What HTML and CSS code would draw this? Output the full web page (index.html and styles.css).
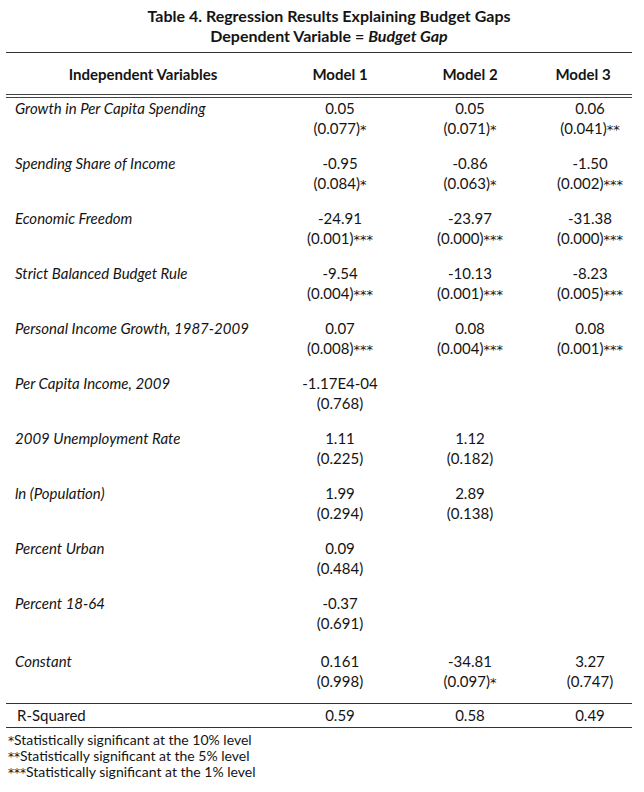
FILE: index.html
```html
<!DOCTYPE html>
<html>
<head>
<meta charset="utf-8">
<link rel="stylesheet" href="styles.css">
</head>
<body>
<div class="page">
  <div class="title">
    <div>Table 4. Regression Results Explaining Budget Gaps</div>
    <div>Dependent Variable = <em>Budget Gap</em></div>
  </div>
  <table class="reg">
    <colgroup>
      <col class="c0"><col class="c1"><col class="c2"><col class="c3">
    </colgroup>
    <thead>
      <tr>
        <th class="hvar">Independent Variables</th>
        <th>Model 1</th>
        <th>Model 2</th>
        <th class="h3">Model 3</th>
      </tr>
    </thead>
    <tbody>
      <tr><td class="var">Growth in Per Capita Spending</td><td><div>0.05</div><div>(0.077)<span class="sig">*</span></div></td><td><div>0.05</div><div>(0.071)<span class="sig">*</span></div></td><td class="m3"><div>0.06</div><div>(0.041)<span class="sig">**</span></div></td></tr>
      <tr><td class="var">Spending Share of Income</td><td><div>-0.95</div><div>(0.084)<span class="sig">*</span></div></td><td><div>-0.86</div><div>(0.063)<span class="sig">*</span></div></td><td class="m3"><div>-1.50</div><div>(0.002)<span class="sig">***</span></div></td></tr>
      <tr><td class="var">Economic Freedom</td><td><div>-24.91</div><div>(0.001)<span class="sig">***</span></div></td><td><div>-23.97</div><div>(0.000)<span class="sig">***</span></div></td><td class="m3"><div>-31.38</div><div>(0.000)<span class="sig">***</span></div></td></tr>
      <tr><td class="var">Strict Balanced Budget Rule</td><td><div>-9.54</div><div>(0.004)<span class="sig">***</span></div></td><td><div>-10.13</div><div>(0.001)<span class="sig">***</span></div></td><td class="m3"><div>-8.23</div><div>(0.005)<span class="sig">***</span></div></td></tr>
      <tr><td class="var">Personal Income Growth, 1987-2009</td><td><div>0.07</div><div>(0.008)<span class="sig">***</span></div></td><td><div>0.08</div><div>(0.004)<span class="sig">***</span></div></td><td class="m3"><div>0.08</div><div>(0.001)<span class="sig">***</span></div></td></tr>
      <tr><td class="var">Per Capita Income, 2009</td><td><div>-1.17E4-04</div><div>(0.768)</div></td><td></td><td class="m3"></td></tr>
      <tr><td class="var">2009 Unemployment Rate</td><td><div>1.11</div><div>(0.225)</div></td><td><div>1.12</div><div>(0.182)</div></td><td class="m3"></td></tr>
      <tr><td class="var">ln (Population)</td><td><div>1.99</div><div>(0.294)</div></td><td><div>2.89</div><div>(0.138)</div></td><td class="m3"></td></tr>
      <tr><td class="var">Percent Urban</td><td><div>0.09</div><div>(0.484)</div></td><td></td><td class="m3"></td></tr>
      <tr><td class="var">Percent 18-64</td><td><div>-0.37</div><div>(0.691)</div></td><td></td><td class="m3"></td></tr>
      <tr class="const"><td class="var">Constant</td><td><div>0.161</div><div>(0.998)</div></td><td><div>-34.81</div><div>(0.097)<span class="sig">*</span></div></td><td class="m3"><div>3.27</div><div>(0.747)</div></td></tr>
      <tr class="rsq"><td class="plain">R-Squared</td><td>0.59</td><td>0.58</td><td class="m3">0.49</td></tr>
    </tbody>
  </table>
  <div class="notes">
    <div><span class="sig">*</span>Statistically significant at the 10% level</div>
    <div><span class="sig">**</span>Statistically significant at the 5% level</div>
    <div><span class="sig">***</span>Statistically significant at the 1% level</div>
  </div>
</div>
</body>
</html>
```
FILE: styles.css
```css
html, body {
  margin: 0;
  padding: 0;
  background: #ffffff;
}
body {
  font-family: "Lato", "Open Sans", sans-serif;
  font-size: 15px;
  color: #141414;
}
.page {
  width: 644px;
  padding-top: 6px;
}
.title {
  text-align: center;
  font-weight: bold;
  font-size: 16px;
  line-height: 20px;
  padding-left: 14px;
}
.title em {
  font-style: italic;
}
.sig {
  font-family: "DejaVu Sans", sans-serif;
  font-size: 13px;
  line-height: 8px;
}
.reg {
  margin-top: 6px;
  margin-left: 6px;
  width: 626px;
  border-collapse: collapse;
  table-layout: fixed;
}
.c0 { width: 274px; }
.c1 { width: 120px; }
.c2 { width: 140px; }
.c3 { width: 92px; }
.reg thead th {
  border-top: 1px solid #333;
  border-bottom: 4px double #444;
  height: 41px;
  padding: 0;
  font-weight: bold;
  text-align: center;
  line-height: 20px;
}
.reg thead th.h3 {
  padding-right: 6px;
}
.reg td {
  padding: 0 0 15px 0;
  vertical-align: top;
  text-align: center;
  line-height: 20px;
}
.reg td.m3 {
  padding-left: 8px;
}
.reg td.var {
  text-align: left;
  font-style: italic;
  padding-left: 9px;
}
.reg tr.const td {
  padding-top: 3px;
  padding-bottom: 12px;
  border-bottom: 1px solid #333;
}
.reg tr.rsq td {
  padding: 1px 0 1px 0;
  line-height: 21px;
  border-bottom: 1px solid #333;
}
.reg tr.rsq td.plain {
  text-align: left;
  padding-left: 11px;
}
.reg tr.rsq td.m3 {
  padding-left: 8px;
}
.notes {
  padding-left: 8px;
  padding-top: 4px;
  font-size: 14px;
  line-height: 16px;
}
.notes .sig {
  font-size: 12px;
}
```
